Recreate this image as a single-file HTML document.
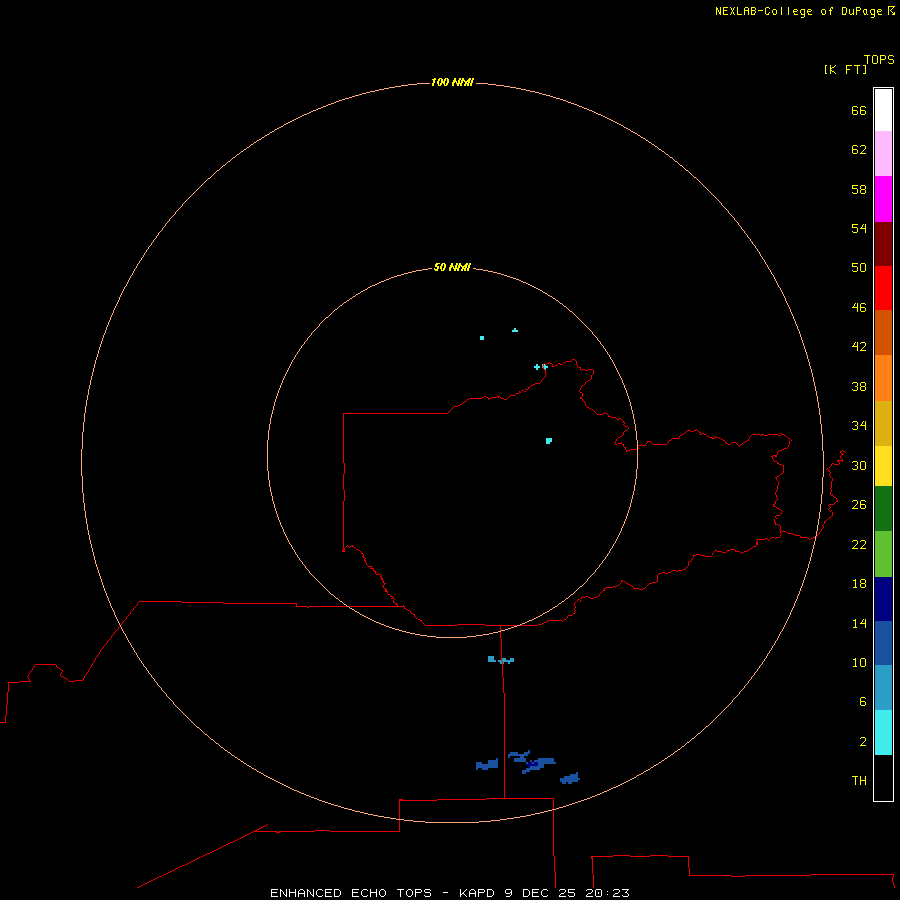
<!DOCTYPE html>
<html lang="en"><head><meta charset="utf-8"><title>ENHANCED ECHO TOPS - KAPD 9 DEC 25 20:23</title>
<style>
html,body{margin:0;padding:0;background:#000;width:900px;height:900px;overflow:hidden}
svg{display:block;position:absolute;left:0;top:0}
.sr{position:absolute;left:0;top:0;width:1px;height:1px;overflow:hidden;color:transparent;font:1px "Liberation Mono",monospace}
</style></head>
<body>
<div class="sr">NEXLAB-College of DuPage. TOPS [K FT] 66 62 58 54 50 46 42 38 34 30 26 22 18 14 10 6 2 TH. 100 NMI. 50 NMI. ENHANCED ECHO TOPS - KAPD 9 DEC 25 20:23</div>
<svg width="900" height="900" viewBox="0 0 900 900" shape-rendering="crispEdges" role="img" aria-label="Enhanced echo tops radar image KAPD">
<rect width="900" height="900" fill="#000"/>
<path fill="#ffff00" d="M888 6h7v1h-7zM716 7h1v1h-1zM716 10h1v5h-1zM720 7h1v5h-1zM720 14h1v1h-1zM723 7h5v1h-5zM723 14h5v1h-5zM730 7h1v1h-1zM730 14h1v1h-1zM734 7h1v1h-1zM734 14h1v1h-1zM737 7h1v7h-1zM745 7h3v1h-3zM751 7h4v1h-4zM751 10h4v1h-4zM751 14h4v1h-4zM766 7h3v1h-3zM766 14h3v1h-3zM781 7h1v8h-1zM788 7h1v8h-1zM831 7h2v1h-2zM842 7h4v1h-4zM842 14h4v1h-4zM856 7h4v1h-4zM856 10h4v1h-4zM888 7h1v8h-1zM888 56h1v3h-1zM888 62h1v1h-1zM893 7h1v1h-1zM893 56h1v1h-1zM893 60h1v3h-1zM716 8h2v2h-2zM723 8h1v2h-1zM723 11h1v3h-1zM731 8h1v2h-1zM731 12h1v2h-1zM733 8h1v2h-1zM733 12h1v2h-1zM744 8h1v2h-1zM744 11h1v4h-1zM748 8h1v2h-1zM748 11h1v4h-1zM751 8h1v2h-1zM751 11h1v3h-1zM755 8h1v2h-1zM755 11h1v2h-1zM765 8h1v6h-1zM769 8h1v1h-1zM769 12h1v1h-1zM830 8h1v2h-1zM830 11h1v4h-1zM830 65h1v3h-1zM830 69h1v1h-1zM830 71h1v3h-1zM832 8h1v1h-1zM842 8h1v6h-1zM846 8h1v5h-1zM846 66h1v3h-1zM846 70h1v4h-1zM856 8h1v2h-1zM856 11h1v4h-1zM856 504h1v1h-1zM856 544h1v1h-1zM860 8h1v2h-1zM860 107h1v3h-1zM860 111h1v3h-1zM860 146h1v1h-1zM860 186h1v3h-1zM860 190h1v3h-1zM860 264h1v7h-1zM860 304h1v3h-1zM860 308h1v3h-1zM860 343h1v1h-1zM860 383h1v3h-1zM860 387h1v3h-1zM860 462h1v7h-1zM860 501h1v3h-1zM860 505h1v3h-1zM860 541h1v1h-1zM860 580h1v3h-1zM860 584h1v3h-1zM860 659h1v7h-1zM860 698h1v3h-1zM860 702h1v3h-1zM860 738h1v1h-1zM860 776h1v4h-1zM860 781h1v4h-1zM892 8h1v1h-1zM892 12h1v1h-1zM773 9h3v1h-3zM773 14h3v1h-3zM794 9h3v1h-3zM801 9h4v1h-4zM801 14h4v1h-4zM808 9h3v1h-3zM822 9h3v1h-3zM822 14h3v1h-3zM849 9h1v5h-1zM853 9h1v4h-1zM853 14h1v1h-1zM853 306h1v1h-1zM853 345h1v1h-1zM853 507h1v1h-1zM853 547h1v1h-1zM864 9h3v1h-3zM871 9h4v1h-4zM871 14h4v1h-4zM878 9h3v1h-3zM891 9h1v1h-1zM891 11h1v1h-1zM718 10h1v2h-1zM723 10h4v1h-4zM732 10h1v2h-1zM744 10h5v1h-5zM758 10h5v1h-5zM772 10h1v3h-1zM776 10h1v4h-1zM793 10h1v1h-1zM793 12h1v1h-1zM797 10h1v1h-1zM800 10h1v3h-1zM804 10h1v4h-1zM804 15h1v2h-1zM807 10h1v1h-1zM807 12h1v1h-1zM811 10h1v1h-1zM821 10h1v3h-1zM825 10h1v4h-1zM825 66h1v7h-1zM829 10h3v1h-3zM863 10h1v3h-1zM863 150h1v1h-1zM863 224h1v1h-1zM863 347h1v1h-1zM863 421h1v1h-1zM863 545h1v1h-1zM863 619h1v1h-1zM863 742h1v1h-1zM866 10h1v4h-1zM870 10h1v3h-1zM874 10h1v4h-1zM874 15h1v2h-1zM877 10h1v1h-1zM877 12h1v1h-1zM877 56h1v7h-1zM881 10h1v1h-1zM890 10h1v1h-1zM793 11h4v1h-4zM807 11h4v1h-4zM877 11h4v1h-4zM719 12h2v2h-2zM894 12h1v1h-1zM754 13h1v1h-1zM768 13h1v1h-1zM773 13h1v1h-1zM794 13h1v1h-1zM801 13h1v1h-1zM808 13h1v1h-1zM822 13h1v1h-1zM845 13h1v1h-1zM852 13h2v1h-2zM864 13h1v1h-1zM864 149h1v1h-1zM864 346h1v1h-1zM864 544h1v1h-1zM864 741h1v1h-1zM871 13h1v1h-1zM878 13h1v1h-1zM893 13h2v1h-2zM737 14h5v1h-5zM794 14h4v1h-4zM808 14h4v1h-4zM850 14h2v1h-2zM864 14h2v1h-2zM867 14h1v1h-1zM867 56h1v8h-1zM878 14h4v1h-4zM892 14h3v1h-3zM801 17h3v1h-3zM871 17h3v1h-3zM864 55h6v1h-6zM873 55h4v1h-4zM873 63h4v1h-4zM880 55h5v1h-5zM880 59h5v1h-5zM889 55h4v1h-4zM889 59h4v1h-4zM889 63h4v1h-4zM872 56h1v7h-1zM880 56h1v3h-1zM880 60h1v4h-1zM885 56h1v3h-1zM825 65h2v1h-2zM825 73h2v1h-2zM835 65h1v1h-1zM835 73h1v1h-1zM846 65h6v1h-6zM854 65h6v1h-6zM863 65h3v1h-3zM863 73h3v1h-3zM834 66h1v1h-1zM834 72h1v1h-1zM857 66h1v8h-1zM857 107h1v1h-1zM857 111h1v3h-1zM857 146h1v1h-1zM857 150h1v3h-1zM857 189h1v4h-1zM857 228h1v4h-1zM857 267h1v4h-1zM857 303h1v4h-1zM857 308h1v4h-1zM857 342h1v4h-1zM857 347h1v4h-1zM857 383h1v3h-1zM857 387h1v3h-1zM857 422h1v3h-1zM857 426h1v3h-1zM857 462h1v3h-1zM857 466h1v3h-1zM857 501h1v3h-1zM857 541h1v3h-1zM865 66h1v7h-1zM865 107h1v1h-1zM865 111h1v3h-1zM865 146h1v3h-1zM865 186h1v3h-1zM865 190h1v3h-1zM865 224h1v4h-1zM865 229h1v4h-1zM865 264h1v7h-1zM865 304h1v1h-1zM865 308h1v3h-1zM865 343h1v3h-1zM865 383h1v3h-1zM865 387h1v3h-1zM865 421h1v4h-1zM865 426h1v4h-1zM865 462h1v7h-1zM865 501h1v1h-1zM865 505h1v3h-1zM865 541h1v3h-1zM865 580h1v3h-1zM865 584h1v3h-1zM865 619h1v4h-1zM865 624h1v4h-1zM865 659h1v7h-1zM865 698h1v1h-1zM865 702h1v3h-1zM865 738h1v3h-1zM865 776h1v4h-1zM865 781h1v4h-1zM832 67h2v1h-2zM832 71h2v1h-2zM830 68h2v1h-2zM830 70h2v1h-2zM846 69h4v1h-4zM434 78h2v1h-2zM439 78h3v1h-3zM445 78h3v1h-3zM454 78h2v2h-2zM454 269h2v2h-2zM459 78h2v2h-2zM459 263h2v2h-2zM462 78h2v2h-2zM462 267h2v1h-2zM469 78h2v1h-2zM469 263h2v2h-2zM472 78h2v2h-2zM432 79h4v1h-4zM438 79h2v2h-2zM441 79h2v2h-2zM441 264h2v2h-2zM444 79h2v2h-2zM444 264h2v4h-2zM447 79h2v4h-2zM468 79h3v1h-3zM433 80h2v3h-2zM453 80h3v1h-3zM458 80h2v3h-2zM458 266h2v2h-2zM461 80h4v1h-4zM467 80h3v1h-3zM471 80h2v3h-2zM437 81h2v3h-2zM437 267h2v2h-2zM441 81h4v2h-4zM453 81h4v1h-4zM461 81h2v2h-2zM461 269h2v2h-2zM464 81h6v1h-6zM452 82h3v1h-3zM456 82h1v1h-1zM465 82h2v1h-2zM465 267h2v1h-2zM468 82h2v1h-2zM468 265h2v3h-2zM432 83h2v3h-2zM440 83h2v2h-2zM440 266h2v3h-2zM443 83h2v1h-2zM443 268h2v2h-2zM446 83h2v2h-2zM452 83h2v3h-2zM456 83h6v1h-6zM465 83h4v1h-4zM470 83h2v3h-2zM438 84h1v1h-1zM444 84h1v1h-1zM457 84h2v2h-2zM457 269h2v2h-2zM460 84h2v2h-2zM464 84h2v2h-2zM464 269h2v2h-2zM467 84h2v2h-2zM467 268h2v3h-2zM438 85h3v1h-3zM444 85h3v1h-3zM853 106h4v1h-4zM853 114h4v1h-4zM853 145h4v1h-4zM853 153h4v1h-4zM853 193h4v1h-4zM853 232h4v1h-4zM853 271h4v1h-4zM853 382h4v1h-4zM853 390h4v1h-4zM853 421h4v1h-4zM853 429h4v1h-4zM853 461h4v1h-4zM853 469h4v1h-4zM853 500h4v1h-4zM853 540h4v1h-4zM853 587h4v1h-4zM853 627h4v1h-4zM853 666h4v1h-4zM861 106h4v1h-4zM861 114h4v1h-4zM861 145h4v1h-4zM861 185h4v1h-4zM861 189h4v1h-4zM861 193h4v1h-4zM861 263h4v1h-4zM861 271h4v1h-4zM861 303h4v1h-4zM861 311h4v1h-4zM861 342h4v1h-4zM861 382h4v1h-4zM861 386h4v1h-4zM861 390h4v1h-4zM861 461h4v1h-4zM861 469h4v1h-4zM861 500h4v1h-4zM861 508h4v1h-4zM861 540h4v1h-4zM861 579h4v1h-4zM861 583h4v1h-4zM861 587h4v1h-4zM861 658h4v1h-4zM861 666h4v1h-4zM861 697h4v1h-4zM861 705h4v1h-4zM861 737h4v1h-4zM852 107h1v3h-1zM852 111h1v3h-1zM852 146h1v3h-1zM852 150h1v3h-1zM852 186h1v2h-1zM852 192h1v1h-1zM852 225h1v2h-1zM852 231h1v1h-1zM852 264h1v2h-1zM852 270h1v1h-1zM852 383h1v1h-1zM852 389h1v1h-1zM852 422h1v1h-1zM852 428h1v1h-1zM852 462h1v1h-1zM852 468h1v1h-1zM852 501h1v1h-1zM852 541h1v1h-1zM852 110h5v1h-5zM852 149h5v1h-5zM852 188h5v1h-5zM852 227h5v1h-5zM852 266h5v1h-5zM860 110h5v1h-5zM860 307h5v1h-5zM860 504h5v1h-5zM860 701h5v1h-5zM862 151h1v1h-1zM862 225h1v2h-1zM862 348h1v1h-1zM862 422h1v2h-1zM862 546h1v1h-1zM862 620h1v2h-1zM862 743h1v1h-1zM861 152h1v1h-1zM861 227h1v1h-1zM861 349h1v1h-1zM861 424h1v1h-1zM861 547h1v1h-1zM861 622h1v1h-1zM861 744h1v1h-1zM860 153h6v1h-6zM860 228h6v1h-6zM860 350h6v1h-6zM860 425h6v1h-6zM860 548h6v1h-6zM860 623h6v1h-6zM860 745h6v1h-6zM860 780h6v1h-6zM852 185h6v1h-6zM852 224h6v1h-6zM852 263h6v1h-6zM852 307h6v1h-6zM852 346h6v1h-6zM852 508h6v1h-6zM852 548h6v1h-6zM852 776h6v1h-6zM436 263h4v1h-4zM442 263h3v1h-3zM451 263h2v2h-2zM456 263h2v2h-2zM466 263h2v1h-2zM435 264h3v1h-3zM435 270h3v1h-3zM465 264h3v1h-3zM435 265h2v1h-2zM450 265h3v1h-3zM455 265h2v3h-2zM458 265h4v1h-4zM464 265h3v1h-3zM435 266h4v1h-4zM450 266h4v1h-4zM461 266h6v1h-6zM449 267h3v1h-3zM453 267h1v1h-1zM434 268h1v1h-1zM449 268h2v3h-2zM453 268h6v1h-6zM462 268h4v1h-4zM434 269h4v1h-4zM441 269h1v1h-1zM441 270h3v1h-3zM855 303h1v1h-1zM855 342h1v1h-1zM855 505h1v1h-1zM855 545h1v1h-1zM855 579h1v1h-1zM855 581h1v6h-1zM855 619h1v1h-1zM855 621h1v6h-1zM855 658h1v1h-1zM855 660h1v6h-1zM855 777h1v8h-1zM854 304h1v2h-1zM854 343h1v2h-1zM854 506h1v1h-1zM854 546h1v1h-1zM855 386h2v1h-2zM855 425h2v1h-2zM855 465h2v1h-2zM853 580h3v1h-3zM853 620h3v1h-3zM853 659h3v1h-3z"/>
<path fill="#ffaa7d" d="M417 83h13v1h-13zM476 83h12v1h-12zM408 84h9v1h-9zM488 84h8v1h-8zM401 85h7v1h-7zM496 85h8v1h-8zM395 86h6v1h-6zM504 86h6v1h-6zM389 87h6v1h-6zM510 87h6v1h-6zM384 88h5v1h-5zM516 88h5v1h-5zM379 89h5v1h-5zM521 89h5v1h-5zM375 90h4v1h-4zM526 90h4v1h-4zM370 91h5v1h-5zM530 91h5v1h-5zM366 92h4v1h-4zM535 92h4v1h-4zM362 93h4v1h-4zM539 93h3v1h-3zM359 94h3v1h-3zM542 94h4v1h-4zM355 95h4v1h-4zM546 95h4v1h-4zM352 96h3v1h-3zM352 810h3v1h-3zM550 96h3v1h-3zM349 97h3v1h-3zM553 97h3v1h-3zM345 98h4v1h-4zM556 98h4v1h-4zM342 99h3v1h-3zM560 99h3v1h-3zM339 100h3v1h-3zM563 100h3v1h-3zM563 806h3v1h-3zM336 101h3v1h-3zM566 101h2v1h-2zM566 598h2v1h-2zM334 102h2v1h-2zM568 102h3v1h-3zM331 103h3v1h-3zM331 804h3v1h-3zM571 103h3v1h-3zM328 104h3v1h-3zM328 803h3v1h-3zM574 104h3v1h-3zM326 105h2v1h-2zM326 317h2v1h-2zM577 105h2v1h-2zM323 106h3v1h-3zM579 106h3v1h-3zM321 107h2v1h-2zM582 107h2v1h-2zM318 108h3v1h-3zM584 108h3v1h-3zM584 799h3v1h-3zM316 109h2v1h-2zM587 109h2v1h-2zM313 110h3v1h-3zM589 110h3v1h-3zM311 111h2v1h-2zM592 111h2v1h-2zM309 112h2v1h-2zM309 796h2v1h-2zM594 112h2v1h-2zM307 113h2v1h-2zM596 113h2v1h-2zM304 114h3v1h-3zM598 114h3v1h-3zM302 115h2v1h-2zM601 115h2v1h-2zM300 116h2v1h-2zM603 116h2v1h-2zM298 117h2v1h-2zM605 117h2v1h-2zM296 118h2v1h-2zM607 118h2v1h-2zM607 790h2v1h-2zM294 119h2v1h-2zM609 119h2v1h-2zM609 789h2v1h-2zM292 120h2v1h-2zM292 789h2v1h-2zM611 120h2v1h-2zM611 788h2v1h-2zM290 121h2v1h-2zM290 788h2v1h-2zM613 121h2v1h-2zM288 122h2v1h-2zM288 787h2v1h-2zM615 122h2v1h-2zM286 123h2v1h-2zM286 786h2v1h-2zM617 123h2v1h-2zM284 124h2v1h-2zM284 785h2v1h-2zM619 124h2v1h-2zM283 125h1v1h-1zM283 378h1v2h-1zM283 529h1v3h-1zM621 125h2v1h-2zM281 126h2v1h-2zM623 126h1v1h-1zM623 383h1v2h-1zM623 524h1v2h-1zM279 127h2v1h-2zM624 127h2v1h-2zM624 782h2v1h-2zM277 128h2v1h-2zM626 128h2v1h-2zM626 781h2v1h-2zM275 129h2v1h-2zM628 129h2v1h-2zM628 780h2v1h-2zM274 130h1v1h-1zM274 402h1v4h-1zM274 504h1v4h-1zM630 130h1v1h-1zM630 402h1v4h-1zM630 503h1v4h-1zM272 131h2v1h-2zM272 779h2v1h-2zM631 131h2v1h-2zM270 132h2v1h-2zM270 778h2v1h-2zM633 132h2v1h-2zM269 133h1v1h-1zM269 424h1v6h-1zM269 480h1v7h-1zM635 133h2v1h-2zM267 134h2v1h-2zM637 134h1v1h-1zM637 440h1v29h-1zM265 135h2v1h-2zM638 135h2v1h-2zM264 136h1v1h-1zM640 136h1v1h-1zM262 137h2v1h-2zM641 137h2v1h-2zM641 773h2v1h-2zM261 138h1v1h-1zM643 138h2v1h-2zM259 139h2v1h-2zM259 772h2v1h-2zM645 139h1v1h-1zM257 140h2v1h-2zM257 771h2v1h-2zM646 140h2v1h-2zM646 770h2v1h-2zM256 141h1v1h-1zM256 770h1v1h-1zM648 141h1v1h-1zM254 142h2v1h-2zM254 769h2v1h-2zM649 142h2v1h-2zM253 143h1v1h-1zM651 143h1v1h-1zM251 144h2v1h-2zM652 144h2v1h-2zM250 145h1v1h-1zM654 145h1v1h-1zM249 146h1v1h-1zM655 146h2v1h-2zM247 147h2v1h-2zM247 765h2v1h-2zM657 147h1v1h-1zM246 148h1v1h-1zM246 764h1v1h-1zM658 148h1v1h-1zM658 763h1v1h-1zM244 149h2v1h-2zM244 763h2v1h-2zM659 149h2v1h-2zM659 762h2v1h-2zM243 150h1v1h-1zM243 762h1v1h-1zM661 150h1v1h-1zM661 761h1v1h-1zM241 151h2v1h-2zM241 761h2v1h-2zM662 151h2v1h-2zM662 760h2v1h-2zM240 152h1v1h-1zM240 760h1v1h-1zM664 152h1v1h-1zM664 759h1v1h-1zM239 153h1v1h-1zM665 153h1v1h-1zM237 154h2v1h-2zM666 154h2v1h-2zM236 155h1v1h-1zM668 155h1v1h-1zM235 156h1v1h-1zM669 156h1v1h-1zM233 157h2v1h-2zM670 157h2v1h-2zM232 158h1v1h-1zM672 158h1v1h-1zM231 159h1v1h-1zM231 754h1v1h-1zM673 159h1v1h-1zM673 753h1v1h-1zM230 160h1v1h-1zM230 753h1v1h-1zM674 160h1v1h-1zM674 752h1v1h-1zM228 161h2v1h-2zM228 752h2v1h-2zM675 161h2v1h-2zM675 751h2v1h-2zM227 162h1v1h-1zM227 751h1v1h-1zM677 162h1v1h-1zM677 750h1v1h-1zM226 163h1v1h-1zM678 163h1v1h-1zM225 164h1v1h-1zM679 164h1v1h-1zM223 165h2v1h-2zM680 165h2v1h-2zM222 166h1v1h-1zM682 166h1v1h-1zM221 167h1v1h-1zM683 167h1v1h-1zM220 168h1v1h-1zM220 746h1v1h-1zM684 168h1v1h-1zM684 745h1v1h-1zM219 169h1v1h-1zM219 745h1v1h-1zM685 169h1v1h-1zM685 744h1v1h-1zM217 170h2v1h-2zM686 170h2v1h-2zM216 171h1v1h-1zM688 171h1v1h-1zM215 172h1v1h-1zM215 742h1v1h-1zM689 172h1v1h-1zM689 741h1v1h-1zM214 173h1v1h-1zM214 741h1v1h-1zM690 173h1v1h-1zM690 740h1v1h-1zM213 174h1v1h-1zM213 740h1v1h-1zM691 174h1v1h-1zM691 739h1v1h-1zM212 175h1v1h-1zM692 175h1v1h-1zM211 176h1v1h-1zM693 176h1v1h-1zM210 177h1v1h-1zM210 738h1v1h-1zM694 177h2v1h-2zM208 178h2v1h-2zM696 178h1v1h-1zM696 735h1v1h-1zM207 179h1v1h-1zM207 735h1v1h-1zM697 179h1v1h-1zM697 734h1v1h-1zM206 180h1v1h-1zM698 180h1v1h-1zM205 181h1v1h-1zM699 181h1v1h-1zM204 182h1v1h-1zM204 733h1v1h-1zM700 182h1v1h-1zM700 732h1v1h-1zM203 183h1v1h-1zM203 732h1v1h-1zM701 183h1v1h-1zM701 731h1v1h-1zM202 184h1v1h-1zM202 731h1v1h-1zM702 184h1v1h-1zM702 730h1v1h-1zM201 185h1v1h-1zM201 730h1v1h-1zM703 185h1v1h-1zM703 729h1v1h-1zM200 186h1v1h-1zM200 729h1v1h-1zM704 186h1v1h-1zM704 728h1v1h-1zM199 187h1v1h-1zM199 728h1v1h-1zM705 187h1v1h-1zM705 727h1v1h-1zM198 188h1v1h-1zM706 188h1v1h-1zM197 189h1v1h-1zM707 189h1v1h-1zM196 190h1v1h-1zM196 726h1v1h-1zM708 190h1v1h-1zM708 725h1v1h-1zM195 191h1v1h-1zM195 725h1v1h-1zM709 191h1v1h-1zM709 724h1v1h-1zM194 192h1v1h-1zM194 724h1v1h-1zM710 192h1v1h-1zM710 723h1v1h-1zM193 193h1v1h-1zM193 723h1v1h-1zM711 193h1v1h-1zM711 722h1v1h-1zM192 194h1v1h-1zM192 722h1v1h-1zM712 194h1v1h-1zM712 721h1v1h-1zM191 195h1v1h-1zM191 721h1v1h-1zM713 195h1v1h-1zM713 720h1v1h-1zM190 196h1v1h-1zM190 720h1v1h-1zM714 196h1v1h-1zM714 719h1v1h-1zM189 197h1v1h-1zM189 719h1v1h-1zM715 197h1v1h-1zM715 718h1v1h-1zM188 198h1v1h-1zM188 718h1v1h-1zM716 198h1v1h-1zM716 717h1v1h-1zM187 199h1v1h-1zM187 717h1v1h-1zM717 199h1v1h-1zM717 716h1v1h-1zM186 200h1v1h-1zM186 716h1v1h-1zM718 200h1v1h-1zM718 715h1v1h-1zM185 201h1v1h-1zM185 715h1v1h-1zM719 201h1v1h-1zM719 714h1v1h-1zM184 202h1v1h-1zM184 714h1v1h-1zM720 202h1v1h-1zM720 713h1v1h-1zM183 203h1v1h-1zM183 713h1v1h-1zM721 203h1v2h-1zM721 712h1v1h-1zM182 204h1v2h-1zM182 712h1v1h-1zM722 205h1v1h-1zM722 711h1v1h-1zM181 206h1v1h-1zM181 711h1v1h-1zM723 206h1v1h-1zM723 710h1v1h-1zM180 207h1v1h-1zM180 710h1v1h-1zM724 207h1v1h-1zM724 709h1v1h-1zM179 208h1v1h-1zM179 709h1v1h-1zM725 208h1v1h-1zM725 708h1v1h-1zM178 209h1v1h-1zM178 708h1v1h-1zM726 209h1v1h-1zM726 707h1v1h-1zM177 210h1v1h-1zM177 707h1v1h-1zM727 210h1v1h-1zM727 706h1v1h-1zM176 211h1v1h-1zM176 706h1v1h-1zM728 211h1v2h-1zM728 705h1v1h-1zM175 212h1v2h-1zM175 705h1v1h-1zM729 213h1v1h-1zM729 704h1v1h-1zM174 214h1v1h-1zM174 704h1v1h-1zM730 214h1v1h-1zM730 703h1v1h-1zM173 215h1v1h-1zM173 702h1v2h-1zM731 215h1v1h-1zM731 702h1v1h-1zM172 216h1v1h-1zM172 701h1v1h-1zM732 216h1v1h-1zM732 700h1v2h-1zM171 217h1v1h-1zM171 700h1v1h-1zM733 217h1v1h-1zM733 699h1v1h-1zM170 218h1v1h-1zM170 699h1v1h-1zM734 218h1v2h-1zM734 698h1v1h-1zM169 219h1v2h-1zM169 698h1v1h-1zM735 220h1v1h-1zM735 697h1v1h-1zM168 221h1v1h-1zM168 697h1v1h-1zM736 221h1v1h-1zM736 696h1v1h-1zM167 222h1v1h-1zM167 696h1v1h-1zM737 222h1v1h-1zM737 695h1v1h-1zM166 223h1v1h-1zM166 694h1v2h-1zM738 223h1v2h-1zM738 694h1v1h-1zM165 224h1v2h-1zM165 693h1v1h-1zM739 225h1v1h-1zM739 692h1v2h-1zM164 226h1v1h-1zM164 692h1v1h-1zM740 226h1v1h-1zM740 691h1v1h-1zM163 227h1v1h-1zM163 691h1v1h-1zM741 227h1v2h-1zM741 690h1v1h-1zM162 228h1v2h-1zM162 690h1v1h-1zM742 229h1v1h-1zM742 689h1v1h-1zM161 230h1v1h-1zM161 688h1v2h-1zM743 230h1v1h-1zM743 688h1v1h-1zM160 231h1v1h-1zM160 687h1v1h-1zM744 231h1v2h-1zM744 686h1v2h-1zM159 232h1v1h-1zM159 686h1v1h-1zM158 233h1v2h-1zM158 685h1v1h-1zM745 233h1v1h-1zM745 685h1v1h-1zM746 234h1v1h-1zM746 684h1v1h-1zM157 235h1v1h-1zM157 683h1v2h-1zM747 235h1v2h-1zM747 683h1v1h-1zM156 236h1v2h-1zM156 682h1v1h-1zM748 237h1v1h-1zM748 681h1v2h-1zM155 238h1v1h-1zM155 681h1v1h-1zM749 238h1v1h-1zM749 680h1v1h-1zM154 239h1v1h-1zM154 679h1v2h-1zM750 239h1v2h-1zM750 679h1v1h-1zM153 240h1v2h-1zM153 678h1v1h-1zM751 241h1v1h-1zM751 677h1v2h-1zM152 242h1v1h-1zM152 677h1v1h-1zM752 242h1v2h-1zM752 676h1v1h-1zM151 243h1v2h-1zM151 675h1v2h-1zM753 244h1v1h-1zM753 675h1v1h-1zM150 245h1v1h-1zM150 674h1v1h-1zM754 245h1v1h-1zM754 673h1v2h-1zM149 246h1v1h-1zM149 673h1v1h-1zM755 246h1v2h-1zM755 672h1v1h-1zM148 247h1v2h-1zM148 671h1v2h-1zM756 248h1v1h-1zM756 671h1v1h-1zM147 249h1v1h-1zM147 670h1v1h-1zM757 249h1v2h-1zM757 669h1v2h-1zM146 250h1v2h-1zM146 668h1v2h-1zM758 251h1v1h-1zM758 668h1v1h-1zM145 252h1v1h-1zM145 667h1v1h-1zM759 252h1v2h-1zM759 666h1v2h-1zM144 253h1v2h-1zM144 666h1v1h-1zM760 254h1v2h-1zM760 665h1v1h-1zM143 255h1v2h-1zM143 664h1v2h-1zM761 256h1v1h-1zM761 664h1v1h-1zM142 257h1v1h-1zM142 663h1v1h-1zM762 257h1v2h-1zM762 662h1v2h-1zM141 258h1v2h-1zM141 661h1v2h-1zM763 259h1v1h-1zM763 661h1v1h-1zM140 260h1v1h-1zM140 660h1v1h-1zM764 260h1v2h-1zM764 659h1v2h-1zM139 261h1v2h-1zM139 658h1v2h-1zM765 262h1v2h-1zM765 658h1v1h-1zM138 263h1v1h-1zM138 657h1v1h-1zM137 264h1v2h-1zM137 655h1v2h-1zM766 264h1v1h-1zM766 656h1v2h-1zM767 265h1v2h-1zM767 654h1v2h-1zM136 266h1v2h-1zM136 653h1v2h-1zM768 267h1v2h-1zM768 653h1v1h-1zM135 268h1v1h-1zM135 652h1v1h-1zM428 268h4v1h-4zM473 268h3v1h-3zM134 269h1v2h-1zM134 650h1v2h-1zM422 269h6v1h-6zM476 269h7v1h-7zM476 635h7v1h-7zM769 269h1v1h-1zM769 651h1v2h-1zM416 270h6v1h-6zM483 270h5v1h-5zM770 270h1v2h-1zM770 650h1v1h-1zM133 271h1v2h-1zM133 648h1v2h-1zM412 271h4v1h-4zM488 271h5v1h-5zM408 272h4v1h-4zM493 272h4v1h-4zM771 272h1v2h-1zM771 648h1v2h-1zM132 273h1v2h-1zM132 647h1v1h-1zM404 273h4v1h-4zM497 273h4v1h-4zM401 274h3v1h-3zM501 274h3v1h-3zM772 274h1v1h-1zM772 646h1v2h-1zM131 275h1v1h-1zM131 645h1v2h-1zM397 275h4v1h-4zM504 275h3v1h-3zM773 275h1v2h-1zM773 645h1v1h-1zM130 276h1v2h-1zM130 643h1v2h-1zM394 276h3v1h-3zM507 276h3v1h-3zM391 277h3v1h-3zM510 277h3v1h-3zM774 277h1v2h-1zM774 643h1v2h-1zM129 278h1v2h-1zM129 642h1v1h-1zM389 278h2v1h-2zM513 278h3v1h-3zM386 279h3v1h-3zM386 626h3v1h-3zM516 279h3v1h-3zM775 279h1v2h-1zM775 641h1v2h-1zM128 280h1v2h-1zM128 640h1v2h-1zM384 280h2v1h-2zM384 625h2v1h-2zM519 280h2v1h-2zM381 281h3v1h-3zM381 624h3v1h-3zM521 281h2v1h-2zM776 281h1v2h-1zM776 640h1v1h-1zM127 282h1v2h-1zM127 638h1v2h-1zM379 282h2v1h-2zM379 623h2v1h-2zM523 282h3v1h-3zM377 283h2v1h-2zM526 283h2v1h-2zM777 283h1v2h-1zM777 638h1v2h-1zM126 284h1v2h-1zM126 636h1v2h-1zM375 284h2v1h-2zM528 284h2v1h-2zM372 285h3v1h-3zM530 285h2v1h-2zM778 285h1v2h-1zM778 636h1v2h-1zM125 286h1v1h-1zM125 634h1v2h-1zM370 286h2v1h-2zM370 619h2v1h-2zM532 286h2v1h-2zM532 619h2v1h-2zM124 287h1v2h-1zM124 633h1v1h-1zM368 287h2v1h-2zM368 618h2v1h-2zM534 287h2v1h-2zM534 618h2v1h-2zM779 287h1v1h-1zM779 634h1v2h-1zM367 288h1v1h-1zM536 288h2v1h-2zM536 617h2v1h-2zM780 288h1v2h-1zM780 632h1v2h-1zM123 289h1v2h-1zM123 631h1v2h-1zM365 289h2v1h-2zM538 289h2v1h-2zM538 616h2v1h-2zM363 290h2v1h-2zM540 290h2v1h-2zM540 615h2v1h-2zM781 290h1v2h-1zM781 631h1v1h-1zM122 291h1v2h-1zM122 629h1v2h-1zM361 291h2v1h-2zM542 291h1v1h-1zM542 614h1v1h-1zM360 292h1v1h-1zM543 292h2v1h-2zM543 613h2v1h-2zM782 292h1v2h-1zM782 629h1v2h-1zM121 293h1v2h-1zM121 627h1v2h-1zM358 293h2v1h-2zM545 293h2v1h-2zM545 612h2v1h-2zM356 294h2v1h-2zM547 294h1v1h-1zM783 294h1v2h-1zM783 627h1v2h-1zM120 295h1v2h-1zM120 625h1v2h-1zM355 295h1v1h-1zM548 295h2v1h-2zM353 296h2v1h-2zM550 296h2v1h-2zM550 609h2v1h-2zM784 296h1v2h-1zM784 625h1v2h-1zM119 297h1v3h-1zM119 623h1v2h-1zM352 297h1v1h-1zM552 297h1v1h-1zM552 608h1v1h-1zM350 298h2v1h-2zM350 608h2v1h-2zM553 298h2v1h-2zM553 607h2v1h-2zM785 298h1v3h-1zM785 623h1v2h-1zM349 299h1v1h-1zM349 607h1v1h-1zM555 299h1v1h-1zM118 300h1v2h-1zM118 621h1v2h-1zM347 300h2v1h-2zM347 606h2v1h-2zM556 300h2v1h-2zM346 301h1v1h-1zM346 605h1v1h-1zM558 301h1v1h-1zM558 604h1v1h-1zM786 301h1v2h-1zM786 621h1v2h-1zM117 302h1v2h-1zM117 619h1v2h-1zM344 302h2v1h-2zM344 604h2v1h-2zM559 302h1v1h-1zM343 303h1v1h-1zM343 603h1v1h-1zM560 303h2v1h-2zM787 303h1v2h-1zM787 619h1v2h-1zM116 304h1v2h-1zM116 617h1v2h-1zM342 304h1v1h-1zM342 602h1v1h-1zM562 304h1v1h-1zM340 305h2v1h-2zM340 601h2v1h-2zM563 305h1v1h-1zM788 305h1v2h-1zM788 617h1v2h-1zM115 306h1v2h-1zM115 615h1v2h-1zM339 306h1v1h-1zM339 600h1v1h-1zM564 306h2v1h-2zM338 307h1v1h-1zM338 599h1v1h-1zM566 307h1v1h-1zM789 307h1v2h-1zM789 615h1v2h-1zM114 308h1v2h-1zM114 612h1v3h-1zM337 308h1v1h-1zM567 308h1v1h-1zM335 309h2v1h-2zM568 309h1v1h-1zM568 597h1v1h-1zM790 309h1v3h-1zM790 612h1v3h-1zM113 310h1v3h-1zM113 610h1v2h-1zM334 310h1v1h-1zM334 596h1v1h-1zM569 310h1v1h-1zM569 596h1v1h-1zM333 311h1v1h-1zM333 595h1v1h-1zM570 311h2v1h-2zM332 312h1v1h-1zM572 312h1v1h-1zM791 312h1v2h-1zM791 610h1v2h-1zM112 313h1v2h-1zM112 608h1v2h-1zM331 313h1v1h-1zM573 313h1v1h-1zM573 593h1v1h-1zM330 314h1v1h-1zM330 593h1v1h-1zM574 314h1v1h-1zM574 592h1v1h-1zM792 314h1v2h-1zM792 608h1v2h-1zM111 315h1v2h-1zM111 606h1v2h-1zM329 315h1v1h-1zM329 592h1v1h-1zM575 315h1v1h-1zM575 591h1v1h-1zM328 316h1v1h-1zM328 591h1v1h-1zM576 316h1v1h-1zM576 590h1v1h-1zM793 316h1v3h-1zM793 606h1v2h-1zM110 317h1v3h-1zM110 603h1v3h-1zM577 317h1v1h-1zM577 589h1v1h-1zM325 318h1v1h-1zM325 588h1v1h-1zM578 318h1v1h-1zM578 588h1v1h-1zM324 319h1v1h-1zM324 587h1v1h-1zM579 319h1v1h-1zM579 587h1v1h-1zM794 319h1v2h-1zM794 603h1v3h-1zM109 320h1v2h-1zM109 601h1v2h-1zM323 320h1v1h-1zM323 586h1v1h-1zM580 320h1v1h-1zM322 321h1v1h-1zM322 585h1v1h-1zM581 321h1v1h-1zM795 321h1v3h-1zM795 601h1v2h-1zM108 322h1v3h-1zM108 598h1v3h-1zM321 322h1v1h-1zM321 584h1v1h-1zM582 322h1v1h-1zM582 585h1v1h-1zM320 323h1v1h-1zM320 583h1v1h-1zM583 323h1v1h-1zM583 584h1v1h-1zM319 324h1v2h-1zM319 582h1v1h-1zM584 324h1v1h-1zM584 583h1v1h-1zM796 324h1v2h-1zM796 599h1v2h-1zM107 325h1v2h-1zM107 596h1v2h-1zM585 325h1v1h-1zM585 582h1v1h-1zM318 326h1v1h-1zM318 581h1v1h-1zM586 326h1v1h-1zM586 581h1v1h-1zM797 326h1v3h-1zM797 596h1v3h-1zM106 327h1v3h-1zM106 593h1v3h-1zM317 327h1v1h-1zM317 580h1v1h-1zM587 327h1v1h-1zM587 579h1v2h-1zM316 328h1v1h-1zM316 579h1v1h-1zM588 328h1v1h-1zM588 578h1v1h-1zM315 329h1v1h-1zM315 578h1v1h-1zM589 329h1v1h-1zM589 577h1v1h-1zM798 329h1v2h-1zM798 594h1v2h-1zM105 330h1v3h-1zM105 591h1v2h-1zM314 330h1v1h-1zM314 577h1v1h-1zM590 330h1v1h-1zM590 576h1v1h-1zM313 331h1v1h-1zM313 576h1v1h-1zM591 331h1v1h-1zM591 575h1v1h-1zM799 331h1v3h-1zM799 591h1v3h-1zM312 332h1v1h-1zM312 575h1v1h-1zM592 332h1v2h-1zM592 574h1v1h-1zM104 333h1v2h-1zM104 588h1v3h-1zM311 333h1v2h-1zM311 574h1v1h-1zM593 334h1v1h-1zM593 573h1v1h-1zM800 334h1v3h-1zM800 588h1v3h-1zM103 335h1v3h-1zM103 585h1v3h-1zM310 335h1v1h-1zM310 573h1v1h-1zM594 335h1v1h-1zM594 572h1v1h-1zM309 336h1v1h-1zM309 571h1v2h-1zM595 336h1v1h-1zM595 570h1v2h-1zM308 337h1v1h-1zM308 570h1v1h-1zM596 337h1v1h-1zM596 569h1v1h-1zM801 337h1v3h-1zM801 586h1v2h-1zM102 338h1v3h-1zM102 582h1v3h-1zM307 338h1v2h-1zM307 569h1v1h-1zM597 338h1v2h-1zM597 568h1v1h-1zM306 340h1v1h-1zM306 568h1v1h-1zM598 340h1v1h-1zM598 567h1v1h-1zM802 340h1v3h-1zM802 583h1v3h-1zM101 341h1v3h-1zM101 579h1v3h-1zM305 341h1v1h-1zM305 566h1v2h-1zM599 341h1v1h-1zM599 565h1v2h-1zM304 342h1v2h-1zM304 565h1v1h-1zM600 342h1v2h-1zM600 564h1v1h-1zM803 343h1v3h-1zM803 580h1v3h-1zM100 344h1v3h-1zM100 576h1v3h-1zM303 344h1v1h-1zM303 564h1v1h-1zM601 344h1v1h-1zM601 563h1v1h-1zM302 345h1v1h-1zM302 562h1v2h-1zM602 345h1v1h-1zM602 561h1v2h-1zM301 346h1v2h-1zM301 561h1v1h-1zM603 346h1v2h-1zM603 560h1v1h-1zM804 346h1v3h-1zM804 577h1v3h-1zM99 347h1v3h-1zM99 573h1v3h-1zM300 348h1v1h-1zM300 560h1v1h-1zM604 348h1v1h-1zM604 559h1v1h-1zM299 349h1v2h-1zM299 558h1v2h-1zM605 349h1v2h-1zM605 557h1v2h-1zM805 349h1v3h-1zM805 574h1v3h-1zM98 350h1v4h-1zM98 570h1v3h-1zM298 351h1v1h-1zM298 557h1v1h-1zM606 351h1v1h-1zM606 556h1v1h-1zM297 352h1v2h-1zM297 555h1v2h-1zM607 352h1v2h-1zM607 554h1v2h-1zM806 352h1v3h-1zM806 571h1v3h-1zM97 354h1v3h-1zM97 567h1v3h-1zM296 354h1v1h-1zM296 554h1v1h-1zM608 354h1v1h-1zM608 553h1v1h-1zM295 355h1v2h-1zM295 552h1v2h-1zM609 355h1v2h-1zM609 551h1v2h-1zM807 355h1v4h-1zM807 568h1v3h-1zM96 357h1v3h-1zM96 564h1v3h-1zM294 357h1v2h-1zM294 550h1v2h-1zM610 357h1v2h-1zM610 549h1v2h-1zM293 359h1v1h-1zM293 549h1v1h-1zM611 359h1v1h-1zM611 548h1v1h-1zM808 359h1v3h-1zM808 564h1v4h-1zM95 360h1v4h-1zM95 560h1v4h-1zM292 360h1v2h-1zM292 547h1v2h-1zM612 360h1v2h-1zM612 546h1v2h-1zM291 362h1v2h-1zM291 545h1v2h-1zM613 362h1v2h-1zM613 544h1v2h-1zM809 362h1v4h-1zM809 561h1v3h-1zM94 364h1v4h-1zM94 556h1v4h-1zM290 364h1v2h-1zM290 544h1v1h-1zM614 364h1v2h-1zM614 543h1v1h-1zM289 366h1v2h-1zM289 542h1v2h-1zM615 366h1v2h-1zM615 541h1v2h-1zM810 366h1v3h-1zM810 557h1v4h-1zM93 368h1v4h-1zM93 552h1v4h-1zM288 368h1v2h-1zM288 540h1v2h-1zM616 368h1v2h-1zM616 539h1v2h-1zM811 369h1v4h-1zM811 553h1v4h-1zM287 370h1v2h-1zM287 538h1v2h-1zM617 370h1v2h-1zM617 537h1v2h-1zM92 372h1v4h-1zM92 548h1v4h-1zM286 372h1v2h-1zM286 536h1v2h-1zM618 372h1v2h-1zM618 535h1v2h-1zM812 373h1v4h-1zM812 549h1v4h-1zM285 374h1v2h-1zM285 534h1v2h-1zM619 374h1v2h-1zM619 533h1v2h-1zM91 376h1v4h-1zM91 544h1v4h-1zM284 376h1v2h-1zM284 532h1v2h-1zM620 376h1v2h-1zM620 531h1v2h-1zM813 377h1v5h-1zM813 545h1v4h-1zM621 378h1v2h-1zM621 528h1v3h-1zM90 380h1v5h-1zM90 540h1v4h-1zM282 380h1v3h-1zM282 527h1v2h-1zM622 380h1v3h-1zM622 526h1v2h-1zM814 382h1v4h-1zM814 541h1v4h-1zM281 383h1v2h-1zM281 525h1v2h-1zM89 385h1v4h-1zM89 535h1v5h-1zM280 385h1v3h-1zM280 522h1v3h-1zM624 385h1v3h-1zM624 521h1v3h-1zM815 386h1v5h-1zM815 536h1v5h-1zM279 388h1v2h-1zM279 520h1v2h-1zM625 388h1v2h-1zM625 519h1v2h-1zM88 389h1v6h-1zM88 530h1v5h-1zM278 390h1v3h-1zM278 517h1v3h-1zM626 390h1v3h-1zM626 516h1v3h-1zM816 391h1v5h-1zM816 531h1v5h-1zM277 393h1v3h-1zM277 514h1v3h-1zM627 393h1v3h-1zM627 513h1v3h-1zM87 395h1v5h-1zM87 524h1v6h-1zM276 396h1v3h-1zM276 511h1v3h-1zM628 396h1v3h-1zM628 510h1v3h-1zM817 396h1v6h-1zM817 525h1v6h-1zM275 399h1v3h-1zM275 508h1v3h-1zM629 399h1v3h-1zM629 507h1v3h-1zM86 400h1v6h-1zM86 518h1v6h-1zM818 402h1v6h-1zM818 519h1v6h-1zM85 406h1v7h-1zM85 511h1v7h-1zM273 406h1v4h-1zM273 501h1v3h-1zM631 406h1v4h-1zM631 499h1v4h-1zM819 408h1v7h-1zM819 512h1v7h-1zM272 410h1v4h-1zM272 496h1v5h-1zM632 410h1v4h-1zM632 495h1v4h-1zM84 413h1v9h-1zM84 503h1v8h-1zM271 414h1v4h-1zM271 492h1v4h-1zM633 414h1v5h-1zM633 491h1v4h-1zM820 415h1v9h-1zM820 504h1v8h-1zM270 418h1v6h-1zM270 487h1v5h-1zM634 419h1v5h-1zM634 485h1v6h-1zM83 422h1v10h-1zM83 493h1v10h-1zM635 424h1v7h-1zM635 479h1v6h-1zM821 424h1v10h-1zM821 494h1v10h-1zM268 430h1v10h-1zM268 471h1v9h-1zM636 431h1v9h-1zM636 469h1v10h-1zM636 776h1v1h-1zM82 432h1v17h-1zM82 476h1v17h-1zM822 434h1v17h-1zM822 477h1v17h-1zM267 440h1v31h-1zM81 449h1v27h-1zM823 451h1v26h-1zM580 586h2v1h-2zM326 589h1v1h-1zM327 590h1v1h-1zM331 594h2v1h-2zM571 594h2v1h-2zM570 595h1v1h-1zM335 597h1v1h-1zM336 598h2v1h-2zM565 599h1v1h-1zM564 600h1v1h-1zM562 601h2v1h-2zM561 602h1v1h-1zM559 603h2v1h-2zM557 605h1v1h-1zM555 606h2v1h-2zM352 609h2v1h-2zM354 610h1v1h-1zM549 610h1v1h-1zM355 611h2v1h-2zM547 611h2v1h-2zM357 612h2v1h-2zM359 613h1v1h-1zM360 614h2v1h-2zM362 615h2v1h-2zM364 616h2v1h-2zM366 617h2v1h-2zM372 620h2v1h-2zM529 620h3v1h-3zM374 621h2v1h-2zM527 621h2v1h-2zM376 622h3v1h-3zM525 622h2v1h-2zM522 623h3v1h-3zM520 624h2v1h-2zM517 625h3v1h-3zM514 626h3v1h-3zM389 627h3v1h-3zM511 627h3v1h-3zM392 628h3v1h-3zM508 628h3v1h-3zM395 629h4v1h-4zM505 629h3v1h-3zM399 630h3v1h-3zM501 630h4v1h-4zM402 631h4v1h-4zM498 631h3v1h-3zM406 632h4v1h-4zM493 632h5v1h-5zM410 633h5v1h-5zM489 633h4v1h-4zM415 634h5v1h-5zM483 634h6v1h-6zM420 635h7v1h-7zM427 636h9v1h-9zM467 636h9v1h-9zM436 637h31v1h-31zM706 726h2v1h-2zM197 727h2v1h-2zM698 733h2v1h-2zM205 734h2v1h-2zM208 736h1v1h-1zM695 736h1v1h-1zM209 737h1v1h-1zM694 737h1v1h-1zM692 738h2v1h-2zM211 739h2v1h-2zM687 742h2v1h-2zM216 743h2v1h-2zM686 743h1v1h-1zM218 744h1v1h-1zM682 746h2v1h-2zM221 747h2v1h-2zM681 747h1v1h-1zM223 748h1v1h-1zM680 748h1v1h-1zM224 749h1v1h-1zM678 749h2v1h-2zM225 750h2v1h-2zM671 754h2v1h-2zM232 755h2v1h-2zM670 755h1v1h-1zM234 756h1v1h-1zM668 756h2v1h-2zM235 757h2v1h-2zM667 757h1v1h-1zM237 758h1v1h-1zM665 758h2v1h-2zM238 759h2v1h-2zM656 764h2v1h-2zM654 765h2v1h-2zM249 766h2v1h-2zM653 766h1v1h-1zM251 767h1v1h-1zM651 767h2v1h-2zM252 768h2v1h-2zM650 768h1v1h-1zM648 769h2v1h-2zM644 771h2v1h-2zM643 772h1v1h-1zM261 773h2v1h-2zM263 774h1v1h-1zM639 774h2v1h-2zM264 775h2v1h-2zM637 775h2v1h-2zM266 776h2v1h-2zM268 777h2v1h-2zM634 777h2v1h-2zM632 778h2v1h-2zM630 779h2v1h-2zM274 780h2v1h-2zM276 781h2v1h-2zM278 782h2v1h-2zM280 783h2v1h-2zM622 783h2v1h-2zM282 784h2v1h-2zM620 784h2v1h-2zM618 785h2v1h-2zM616 786h2v1h-2zM613 787h3v1h-3zM294 790h3v1h-3zM297 791h2v1h-2zM604 791h3v1h-3zM299 792h2v1h-2zM602 792h2v1h-2zM301 793h3v1h-3zM600 793h2v1h-2zM304 794h2v1h-2zM597 794h3v1h-3zM306 795h3v1h-3zM595 795h2v1h-2zM592 796h3v1h-3zM311 797h3v1h-3zM590 797h2v1h-2zM314 798h3v1h-3zM587 798h3v1h-3zM317 799h2v1h-2zM319 800h3v1h-3zM581 800h3v1h-3zM322 801h3v1h-3zM578 801h3v1h-3zM325 802h3v1h-3zM575 802h3v1h-3zM572 803h3v1h-3zM569 804h3v1h-3zM334 805h4v1h-4zM566 805h3v1h-3zM338 806h3v1h-3zM341 807h3v1h-3zM559 807h4v1h-4zM344 808h4v1h-4zM556 808h3v1h-3zM348 809h4v1h-4zM552 809h4v1h-4zM548 810h4v1h-4zM355 811h5v1h-5zM544 811h4v1h-4zM360 812h4v1h-4zM540 812h4v1h-4zM364 813h4v1h-4zM535 813h5v1h-5zM368 814h5v1h-5zM531 814h4v1h-4zM373 815h5v1h-5zM526 815h5v1h-5zM378 816h6v1h-6zM520 816h6v1h-6zM384 817h6v1h-6zM514 817h6v1h-6zM390 818h6v1h-6zM507 818h7v1h-7zM396 819h8v1h-8zM500 819h7v1h-7zM404 820h9v1h-9zM491 820h9v1h-9zM413 821h12v1h-12zM479 821h12v1h-12zM425 822h54v1h-54z"/>
<path fill="#ffffff" d="M873 87h21v1h-21zM873 801h21v1h-21zM873 88h1v713h-1zM893 88h1v713h-1zM875 89h17v42h-17zM271 889h7v1h-7zM271 896h7v1h-7zM280 889h1v1h-1zM280 891h1v6h-1zM286 889h1v6h-1zM286 896h1v1h-1zM289 889h1v3h-1zM289 893h1v4h-1zM295 889h1v3h-1zM295 893h1v4h-1zM300 889h3v1h-3zM307 889h1v1h-1zM307 891h1v6h-1zM313 889h1v6h-1zM313 896h1v1h-1zM318 889h4v1h-4zM318 896h4v1h-4zM325 889h7v1h-7zM325 896h7v1h-7zM334 889h5v1h-5zM334 896h5v1h-5zM352 889h7v1h-7zM352 896h7v1h-7zM363 889h4v1h-4zM363 896h4v1h-4zM370 889h1v3h-1zM370 893h1v4h-1zM376 889h1v3h-1zM376 893h1v4h-1zM381 889h3v1h-3zM381 896h3v1h-3zM397 889h7v1h-7zM408 889h3v1h-3zM408 896h3v1h-3zM415 889h6v1h-6zM415 892h6v1h-6zM425 889h5v1h-5zM425 892h5v1h-5zM425 896h5v1h-5zM460 889h1v5h-1zM460 895h1v2h-1zM466 889h1v1h-1zM466 896h1v1h-1zM471 889h3v1h-3zM478 889h6v1h-6zM478 892h6v1h-6zM487 889h5v1h-5zM487 896h5v1h-5zM506 889h5v1h-5zM523 889h5v1h-5zM523 896h5v1h-5zM532 889h7v1h-7zM532 896h7v1h-7zM543 889h4v1h-4zM543 896h4v1h-4zM560 889h5v1h-5zM568 889h7v1h-7zM587 889h5v1h-5zM596 889h5v1h-5zM596 896h5v1h-5zM614 889h5v1h-5zM622 889h7v1h-7zM271 890h1v2h-1zM271 893h1v3h-1zM280 890h2v1h-2zM299 890h1v1h-1zM303 890h1v1h-1zM307 890h2v1h-2zM317 890h1v1h-1zM317 895h1v1h-1zM322 890h1v1h-1zM322 895h1v1h-1zM325 890h1v2h-1zM325 893h1v3h-1zM334 890h1v6h-1zM339 890h1v1h-1zM339 895h1v1h-1zM352 890h1v2h-1zM352 893h1v3h-1zM362 890h1v1h-1zM362 895h1v1h-1zM367 890h1v1h-1zM367 895h1v1h-1zM380 890h1v1h-1zM380 895h1v1h-1zM384 890h1v1h-1zM384 895h1v1h-1zM400 890h1v7h-1zM407 890h1v1h-1zM407 895h1v1h-1zM411 890h1v1h-1zM411 895h1v1h-1zM415 890h1v2h-1zM415 893h1v4h-1zM421 890h1v2h-1zM424 890h1v2h-1zM424 895h1v1h-1zM430 890h1v1h-1zM430 893h1v3h-1zM465 890h1v1h-1zM465 895h1v1h-1zM470 890h1v1h-1zM474 890h1v1h-1zM478 890h1v2h-1zM478 893h1v4h-1zM484 890h1v2h-1zM487 890h1v6h-1zM492 890h1v1h-1zM492 895h1v1h-1zM505 890h1v3h-1zM511 890h1v2h-1zM511 893h1v2h-1zM523 890h1v6h-1zM528 890h1v1h-1zM528 895h1v1h-1zM532 890h1v2h-1zM532 893h1v3h-1zM542 890h1v1h-1zM542 895h1v1h-1zM547 890h1v1h-1zM547 895h1v1h-1zM559 890h1v1h-1zM559 895h1v1h-1zM565 890h1v2h-1zM568 890h1v2h-1zM568 895h1v1h-1zM586 890h1v1h-1zM586 895h1v1h-1zM592 890h1v2h-1zM595 890h1v6h-1zM601 890h1v6h-1zM613 890h1v1h-1zM613 895h1v1h-1zM619 890h1v2h-1zM627 890h1v1h-1zM627 893h1v1h-1zM282 891h1v1h-1zM298 891h1v2h-1zM298 894h1v3h-1zM304 891h1v2h-1zM304 894h1v3h-1zM309 891h1v1h-1zM316 891h1v4h-1zM340 891h1v4h-1zM361 891h1v4h-1zM379 891h1v4h-1zM385 891h1v4h-1zM406 891h1v4h-1zM412 891h1v4h-1zM464 891h1v1h-1zM464 894h1v1h-1zM469 891h1v2h-1zM469 894h1v3h-1zM475 891h1v2h-1zM475 894h1v3h-1zM493 891h1v4h-1zM529 891h1v4h-1zM541 891h1v4h-1zM607 891h1v1h-1zM607 894h1v1h-1zM626 891h1v1h-1zM271 892h6v1h-6zM283 892h1v2h-1zM289 892h7v1h-7zM310 892h1v2h-1zM325 892h6v1h-6zM352 892h6v1h-6zM370 892h7v1h-7zM443 892h5v1h-5zM463 892h1v1h-1zM510 892h2v1h-2zM532 892h6v1h-6zM564 892h1v1h-1zM568 892h6v1h-6zM591 892h1v1h-1zM598 892h1v2h-1zM618 892h1v1h-1zM625 892h2v1h-2zM298 893h7v1h-7zM462 893h2v1h-2zM469 893h7v1h-7zM506 893h4v1h-4zM506 896h4v1h-4zM561 893h3v1h-3zM574 893h1v3h-1zM588 893h3v1h-3zM615 893h3v1h-3zM284 894h1v1h-1zM311 894h1v1h-1zM460 894h2v1h-2zM560 894h1v1h-1zM587 894h1v1h-1zM614 894h1v1h-1zM628 894h1v2h-1zM285 895h2v1h-2zM312 895h2v1h-2zM510 895h1v1h-1zM622 895h1v1h-1zM559 896h7v1h-7zM569 896h5v1h-5zM586 896h7v1h-7zM613 896h7v1h-7zM623 896h5v1h-5z"/>
<path fill="#ffbbff" d="M875 131h17v45h-17z"/>
<path fill="#ff00ff" d="M875 176h17v46h-17z"/>
<path fill="#800000" d="M875 222h17v44h-17z"/>
<path fill="#ff0000" d="M875 266h17v44h-17z"/>
<path fill="#d25400" d="M875 310h17v45h-17z"/>
<path fill="#40ecec" d="M514 328h2v2h-2zM512 330h6v2h-6zM480 336h4v4h-4zM536 364h2v2h-2zM536 368h2v2h-2zM542 364h1v2h-1zM542 367h1v1h-1zM544 364h1v1h-1zM544 365h2v1h-2zM544 368h2v1h-2zM534 366h6v2h-6zM543 366h5v1h-5zM544 367h4v1h-4zM545 369h1v1h-1zM546 438h6v4h-6zM546 442h4v2h-4zM875 710h17v45h-17z"/>
<path fill="#ff8014" d="M875 355h17v46h-17z"/>
<path fill="#e60000" d="M572 359h3v1h-3zM571 360h1v1h-1zM575 360h1v1h-1zM575 602h1v1h-1zM575 606h1v2h-1zM575 610h1v1h-1zM575 612h1v1h-1zM566 361h5v1h-5zM576 361h1v4h-1zM576 601h1v1h-1zM549 362h1v1h-1zM564 362h2v1h-2zM564 619h2v1h-2zM544 363h1v1h-1zM544 369h1v2h-1zM544 377h1v1h-1zM547 363h2v1h-2zM550 363h2v1h-2zM558 363h2v1h-2zM563 363h1v1h-1zM563 620h1v1h-1zM543 364h1v2h-1zM543 367h1v2h-1zM543 378h1v1h-1zM545 364h2v1h-2zM552 364h1v2h-1zM557 364h1v1h-1zM560 364h3v1h-3zM555 365h2v1h-2zM577 365h1v2h-1zM577 600h1v1h-1zM542 366h1v1h-1zM542 379h1v1h-1zM552 366h3v1h-3zM578 367h3v1h-3zM580 368h1v2h-1zM580 388h1v2h-1zM580 600h1v2h-1zM582 369h3v1h-3zM588 369h5v1h-5zM581 370h1v1h-1zM581 386h1v2h-1zM581 597h1v2h-1zM585 370h3v1h-3zM585 596h3v1h-3zM593 370h1v4h-1zM593 410h1v1h-1zM593 874h1v14h-1zM545 371h1v3h-1zM545 375h1v2h-1zM546 374h1v1h-1zM592 374h1v1h-1zM592 859h1v15h-1zM591 375h1v4h-1zM590 379h1v1h-1zM541 380h1v2h-1zM588 380h2v1h-2zM588 597h2v1h-2zM586 381h2v1h-2zM540 382h1v1h-1zM585 382h1v2h-1zM585 403h1v3h-1zM535 383h5v1h-5zM533 384h2v1h-2zM584 384h1v1h-1zM584 402h1v1h-1zM531 385h2v1h-2zM582 385h2v1h-2zM530 386h1v1h-1zM528 387h2v1h-2zM528 388h1v1h-1zM525 389h3v1h-3zM522 390h2v1h-2zM579 390h1v2h-1zM519 391h1v1h-1zM521 391h1v1h-1zM524 391h2v1h-2zM519 392h2v1h-2zM580 392h2v1h-2zM580 397h2v2h-2zM516 393h3v1h-3zM582 393h1v4h-1zM582 399h1v2h-1zM582 596h1v1h-1zM515 394h1v1h-1zM497 395h1v1h-1zM510 395h5v1h-5zM484 396h2v1h-2zM497 396h3v1h-3zM509 396h1v1h-1zM482 397h2v1h-2zM486 397h2v1h-2zM491 397h6v1h-6zM498 397h1v1h-1zM500 397h1v1h-1zM500 626h1v5h-1zM500 632h1v7h-1zM508 397h1v1h-1zM469 398h13v1h-13zM488 398h3v1h-3zM501 398h3v1h-3zM507 398h1v1h-1zM467 399h2v1h-2zM488 399h1v1h-1zM504 399h3v1h-3zM466 400h1v1h-1zM464 401h2v1h-2zM583 401h2v1h-2zM583 597h2v1h-2zM463 402h1v1h-1zM462 403h1v1h-1zM460 404h2v1h-2zM458 405h2v1h-2zM454 406h4v1h-4zM586 406h1v1h-1zM453 407h1v1h-1zM587 407h2v1h-2zM452 408h1v1h-1zM589 408h2v1h-2zM451 409h1v1h-1zM591 409h2v1h-2zM591 857h2v2h-2zM450 410h1v1h-1zM449 411h1v1h-1zM594 411h1v1h-1zM448 412h1v1h-1zM595 412h1v1h-1zM604 412h1v1h-1zM604 589h1v1h-1zM343 413h105v1h-105zM596 413h1v1h-1zM603 413h1v1h-1zM605 413h2v1h-2zM343 414h1v49h-1zM343 474h1v16h-1zM343 501h1v47h-1zM597 414h6v1h-6zM607 414h1v1h-1zM608 415h1v1h-1zM608 416h3v1h-3zM611 417h5v1h-5zM616 418h1v1h-1zM616 439h1v2h-1zM616 586h1v1h-1zM619 418h2v1h-2zM617 419h2v1h-2zM617 585h2v1h-2zM621 419h1v1h-1zM621 442h1v1h-1zM621 581h1v2h-1zM622 420h1v1h-1zM622 435h1v1h-1zM623 421h1v1h-1zM623 424h1v1h-1zM623 432h1v3h-1zM623 445h1v2h-1zM623 422h2v1h-2zM623 581h2v1h-2zM624 423h1v1h-1zM624 425h1v1h-1zM624 431h1v1h-1zM625 426h3v1h-3zM628 427h1v2h-1zM627 429h1v1h-1zM696 429h1v1h-1zM625 430h2v1h-2zM687 430h4v1h-4zM694 430h2v1h-2zM697 430h1v1h-1zM686 431h1v1h-1zM686 567h1v1h-1zM691 431h3v1h-3zM698 431h1v1h-1zM685 432h1v1h-1zM685 568h1v1h-1zM699 432h2v1h-2zM684 433h1v1h-1zM700 433h1v1h-1zM702 433h2v1h-2zM757 433h1v1h-1zM757 541h1v1h-1zM781 433h1v1h-1zM781 510h1v1h-1zM781 512h1v2h-1zM781 534h1v1h-1zM682 434h2v1h-2zM700 434h2v1h-2zM704 434h2v1h-2zM752 434h5v1h-5zM758 434h2v1h-2zM761 434h3v1h-3zM768 434h10v1h-10zM781 434h3v1h-3zM680 435h2v1h-2zM706 435h1v1h-1zM751 435h1v1h-1zM760 435h1v1h-1zM764 435h4v1h-4zM778 435h3v1h-3zM784 435h2v1h-2zM620 436h2v1h-2zM679 436h1v2h-1zM707 436h2v1h-2zM715 436h1v1h-1zM750 436h1v1h-1zM786 436h1v1h-1zM618 437h2v1h-2zM709 437h3v1h-3zM714 437h1v1h-1zM714 551h1v1h-1zM716 437h3v1h-3zM749 437h1v2h-1zM749 549h1v1h-1zM787 437h1v1h-1zM787 447h1v1h-1zM617 438h1v1h-1zM672 438h7v1h-7zM712 438h3v1h-3zM719 438h2v1h-2zM788 438h2v1h-2zM671 439h1v1h-1zM671 571h1v1h-1zM721 439h2v1h-2zM748 439h1v1h-1zM790 439h1v1h-1zM669 440h2v1h-2zM723 440h2v1h-2zM747 440h2v1h-2zM747 550h2v1h-2zM791 440h1v1h-1zM615 441h1v2h-1zM615 587h1v1h-1zM647 441h4v1h-4zM668 441h1v2h-1zM725 441h1v2h-1zM745 441h2v1h-2zM789 441h1v4h-1zM647 442h1v1h-1zM647 585h1v1h-1zM651 442h1v1h-1zM732 442h4v1h-4zM743 442h2v1h-2zM614 443h1v1h-1zM617 443h5v1h-5zM646 443h1v1h-1zM646 586h1v1h-1zM652 443h1v1h-1zM667 443h1v1h-1zM726 443h2v1h-2zM731 443h1v1h-1zM736 443h1v1h-1zM742 443h1v1h-1zM742 553h1v1h-1zM615 444h2v1h-2zM622 444h2v1h-2zM641 444h1v1h-1zM645 444h1v1h-1zM645 587h1v1h-1zM653 444h14v1h-14zM728 444h3v1h-3zM737 444h1v1h-1zM740 444h2v1h-2zM740 552h2v1h-2zM638 445h3v1h-3zM642 445h4v1h-4zM738 445h1v1h-1zM740 445h1v1h-1zM788 445h1v2h-1zM739 446h1v1h-1zM624 447h2v1h-2zM638 447h1v2h-1zM625 448h1v2h-1zM625 582h1v1h-1zM784 448h3v1h-3zM630 449h7v1h-7zM782 449h2v1h-2zM782 465h2v1h-2zM626 450h1v1h-1zM628 450h2v1h-2zM628 584h2v1h-2zM779 450h3v1h-3zM779 464h3v1h-3zM842 450h1v1h-1zM842 459h1v1h-1zM842 461h1v1h-1zM626 451h2v1h-2zM626 583h2v1h-2zM778 451h1v1h-1zM778 481h1v1h-1zM778 483h1v2h-1zM840 451h2v1h-2zM843 451h2v1h-2zM777 452h1v3h-1zM777 462h1v1h-1zM777 480h1v1h-1zM777 485h1v5h-1zM777 498h1v2h-1zM840 452h1v1h-1zM840 456h1v2h-1zM845 452h1v1h-1zM841 453h2v1h-2zM842 454h2v1h-2zM773 455h4v1h-4zM841 455h1v1h-1zM841 458h1v1h-1zM771 456h2v1h-2zM775 456h2v1h-2zM775 477h2v1h-2zM772 457h1v2h-1zM773 459h1v2h-1zM773 505h1v1h-1zM837 460h6v1h-6zM774 461h3v1h-3zM837 461h2v1h-2zM839 462h1v2h-1zM344 463h1v11h-1zM344 490h1v11h-1zM777 463h2v1h-2zM777 476h2v1h-2zM777 508h2v1h-2zM832 463h2v1h-2zM831 464h1v2h-1zM831 477h1v1h-1zM831 481h1v7h-1zM831 489h1v3h-1zM831 510h1v1h-1zM831 516h1v1h-1zM834 464h5v1h-5zM783 466h1v7h-1zM830 466h1v1h-1zM830 472h1v2h-1zM830 476h1v1h-1zM830 488h1v1h-1zM830 492h1v3h-1zM830 507h1v1h-1zM830 511h1v1h-1zM829 467h1v1h-1zM829 471h1v1h-1zM829 474h1v2h-1zM829 506h1v1h-1zM829 508h1v1h-1zM829 510h1v1h-1zM827 468h2v1h-2zM826 469h1v1h-1zM826 520h1v1h-1zM828 470h2v1h-2zM781 473h2v1h-2zM780 474h1v1h-1zM780 514h1v1h-1zM780 526h1v3h-1zM780 531h1v3h-1zM780 535h1v2h-1zM779 475h1v1h-1zM779 482h1v1h-1zM779 529h1v1h-1zM776 478h1v2h-1zM776 490h1v2h-1zM776 495h1v3h-1zM776 500h1v1h-1zM776 507h1v1h-1zM776 518h1v1h-1zM832 478h1v3h-1zM832 494h1v1h-1zM832 512h1v4h-1zM775 492h1v3h-1zM775 501h1v3h-1zM775 516h1v2h-1zM775 523h1v1h-1zM775 538h1v1h-1zM831 495h2v1h-2zM833 496h1v1h-1zM834 497h2v1h-2zM836 498h1v2h-1zM837 500h1v1h-1zM836 501h2v1h-2zM835 502h1v1h-1zM834 503h1v1h-1zM773 504h2v1h-2zM829 504h5v1h-5zM828 505h1v1h-1zM828 509h1v1h-1zM828 518h1v1h-1zM773 506h3v1h-3zM779 509h2v1h-2zM782 511h1v1h-1zM776 515h4v1h-4zM776 537h4v1h-4zM829 517h2v1h-2zM774 519h1v3h-1zM827 519h1v1h-1zM824 521h2v1h-2zM774 522h2v1h-2zM824 522h1v2h-1zM775 524h3v1h-3zM823 524h1v1h-1zM823 526h1v2h-1zM778 525h2v1h-2zM822 525h1v1h-1zM822 528h1v1h-1zM821 529h1v2h-1zM780 530h2v1h-2zM782 531h4v1h-4zM820 531h1v1h-1zM786 532h2v1h-2zM819 532h1v2h-1zM788 533h5v1h-5zM793 534h2v1h-2zM818 534h1v1h-1zM795 535h5v1h-5zM817 535h1v1h-1zM800 536h1v1h-1zM816 536h1v2h-1zM771 537h3v1h-3zM800 537h7v1h-7zM813 537h2v1h-2zM765 538h2v1h-2zM770 538h1v1h-1zM807 538h2v1h-2zM811 538h2v1h-2zM757 539h8v1h-8zM767 539h1v1h-1zM769 539h1v1h-1zM809 539h2v1h-2zM756 540h1v1h-1zM756 545h1v1h-1zM768 540h1v1h-1zM756 542h2v3h-2zM347 545h1v1h-1zM352 545h1v1h-1zM346 546h1v1h-1zM348 546h1v1h-1zM350 546h4v1h-4zM753 546h3v1h-3zM345 547h1v1h-1zM349 547h1v1h-1zM354 547h1v1h-1zM752 547h1v1h-1zM343 548h2v2h-2zM355 548h1v1h-1zM750 548h2v1h-2zM356 549h2v1h-2zM730 549h5v1h-5zM342 550h3v2h-3zM358 550h2v1h-2zM715 550h2v1h-2zM727 550h3v1h-3zM735 550h1v1h-1zM360 551h1v1h-1zM717 551h5v1h-5zM726 551h1v1h-1zM735 551h5v1h-5zM744 551h3v1h-3zM361 552h1v1h-1zM713 552h1v1h-1zM722 552h4v1h-4zM743 552h1v1h-1zM361 553h2v1h-2zM712 553h1v2h-1zM363 554h1v2h-1zM696 554h4v1h-4zM693 555h3v1h-3zM700 555h5v1h-5zM362 556h2v1h-2zM693 556h1v2h-1zM705 556h7v1h-7zM363 557h2v1h-2zM365 558h1v1h-1zM365 561h1v2h-1zM692 558h1v1h-1zM364 559h1v1h-1zM691 559h1v2h-1zM364 560h2v1h-2zM689 561h2v1h-2zM688 562h1v4h-1zM688 857h1v11h-1zM366 563h1v2h-1zM367 565h1v1h-1zM368 566h4v1h-4zM687 566h1v1h-1zM371 567h1v1h-1zM370 568h4v1h-4zM373 569h1v1h-1zM683 569h2v1h-2zM373 570h2v1h-2zM672 570h4v1h-4zM678 570h5v1h-5zM374 571h2v1h-2zM676 571h2v1h-2zM375 572h2v1h-2zM662 572h3v1h-3zM668 572h3v1h-3zM375 573h1v1h-1zM378 573h1v1h-1zM659 573h3v1h-3zM665 573h3v1h-3zM376 574h2v1h-2zM379 574h2v1h-2zM658 574h1v1h-1zM381 575h1v1h-1zM381 577h1v1h-1zM657 575h1v6h-1zM380 576h2v1h-2zM381 578h2v2h-2zM383 580h1v1h-1zM383 582h1v1h-1zM383 586h1v2h-1zM621 580h2v1h-2zM382 581h2v1h-2zM382 585h2v1h-2zM656 581h2v1h-2zM652 582h4v1h-4zM384 583h2v1h-2zM384 588h2v1h-2zM620 583h1v1h-1zM649 583h3v1h-3zM384 584h1v1h-1zM619 584h1v1h-1zM648 584h1v1h-1zM630 585h2v1h-2zM613 586h2v1h-2zM632 586h1v1h-1zM606 587h7v1h-7zM633 587h1v1h-1zM604 588h2v1h-2zM633 588h6v1h-6zM643 588h2v1h-2zM385 589h2v2h-2zM639 589h4v1h-4zM603 590h2v1h-2zM385 591h3v1h-3zM602 591h1v1h-1zM387 592h1v2h-1zM601 592h1v1h-1zM600 593h1v1h-1zM388 594h2v1h-2zM599 594h1v2h-1zM390 595h1v1h-1zM390 596h3v1h-3zM597 596h2v1h-2zM393 597h1v1h-1zM393 600h1v2h-1zM594 597h3v1h-3zM391 598h3v1h-3zM590 598h4v1h-4zM394 599h1v1h-1zM578 599h2v1h-2zM139 601h43v1h-43zM138 602h1v1h-1zM182 602h41v1h-41zM393 602h2v1h-2zM137 603h1v2h-1zM223 603h74v1h-74zM395 603h2v1h-2zM574 603h1v3h-1zM574 608h1v2h-1zM574 611h1v1h-1zM296 604h1v2h-1zM396 604h2v1h-2zM136 605h1v1h-1zM397 605h1v1h-1zM403 605h1v1h-1zM135 606h1v1h-1zM296 606h11v1h-11zM309 606h38v1h-38zM349 606h56v1h-56zM134 607h1v1h-1zM307 607h2v1h-2zM404 607h1v1h-1zM133 608h1v2h-1zM404 608h2v1h-2zM406 609h2v1h-2zM132 610h1v1h-1zM408 610h2v1h-2zM131 611h1v1h-1zM410 611h1v2h-1zM130 612h1v2h-1zM411 613h2v1h-2zM573 613h2v1h-2zM129 614h1v1h-1zM413 614h2v1h-2zM572 614h1v1h-1zM128 615h1v1h-1zM414 615h1v2h-1zM568 615h4v1h-4zM127 616h1v1h-1zM567 616h1v2h-1zM126 617h1v2h-1zM415 617h1v1h-1zM416 618h2v1h-2zM566 618h1v1h-1zM125 619h1v1h-1zM418 619h2v1h-2zM124 620h1v1h-1zM420 620h2v1h-2zM548 620h14v1h-14zM123 621h1v1h-1zM421 621h1v1h-1zM546 621h2v1h-2zM562 621h1v1h-1zM122 622h1v2h-1zM422 622h1v1h-1zM544 622h2v1h-2zM423 623h1v1h-1zM542 623h2v1h-2zM121 624h1v1h-1zM424 624h1v1h-1zM457 624h28v1h-28zM538 624h4v1h-4zM425 625h32v1h-32zM485 625h32v1h-32zM520 625h18v1h-18zM119 626h1v1h-1zM118 627h1v2h-1zM117 629h1v1h-1zM116 630h1v1h-1zM115 631h1v1h-1zM114 632h1v2h-1zM113 634h1v1h-1zM112 635h1v1h-1zM111 636h1v2h-1zM110 638h1v1h-1zM109 639h1v1h-1zM501 639h1v22h-1zM108 640h1v1h-1zM107 641h1v2h-1zM106 643h1v1h-1zM105 644h1v1h-1zM104 645h1v1h-1zM103 646h1v2h-1zM102 648h1v1h-1zM101 649h1v1h-1zM100 650h1v2h-1zM99 652h1v2h-1zM98 654h1v1h-1zM97 655h1v2h-1zM96 657h1v1h-1zM95 658h1v2h-1zM94 660h1v2h-1zM502 661h1v16h-1zM93 662h1v1h-1zM92 663h1v2h-1zM35 664h21v1h-21zM34 665h1v2h-1zM56 665h1v2h-1zM91 665h1v2h-1zM33 667h1v1h-1zM57 667h2v1h-2zM90 667h1v1h-1zM32 668h1v2h-1zM59 668h1v1h-1zM89 668h1v2h-1zM60 669h2v1h-2zM31 670h1v1h-1zM62 670h1v2h-1zM88 670h1v2h-1zM30 671h1v2h-1zM61 672h1v2h-1zM87 672h1v1h-1zM29 673h1v1h-1zM29 679h1v2h-1zM86 673h1v2h-1zM28 674h1v2h-1zM28 677h1v2h-1zM60 674h1v2h-1zM85 675h1v1h-1zM27 676h1v1h-1zM61 676h2v1h-2zM84 676h1v2h-1zM63 677h2v1h-2zM503 677h1v16h-1zM65 678h2v1h-2zM83 678h1v2h-1zM67 679h1v1h-1zM68 680h1v1h-1zM75 680h8v1h-8zM19 681h12v1h-12zM69 681h6v1h-6zM8 682h11v1h-11zM8 683h1v9h-1zM7 692h1v13h-1zM504 693h1v105h-1zM6 705h1v10h-1zM5 715h1v7h-1zM0 722h6v1h-6zM486 798h68v1h-68zM399 799h4v1h-4zM437 799h49v1h-49zM553 799h1v10h-1zM553 810h1v46h-1zM399 800h38v1h-38zM399 801h1v18h-1zM399 820h1v11h-1zM267 824h1v1h-1zM265 825h2v1h-2zM263 826h2v1h-2zM261 827h2v1h-2zM259 828h2v1h-2zM257 829h2v1h-2zM255 830h2v1h-2zM315 830h15v1h-15zM253 831h24v1h-24zM279 831h36v1h-36zM330 831h70v1h-70zM251 832h2v1h-2zM276 832h4v1h-4zM249 833h2v1h-2zM247 834h2v1h-2zM245 835h2v1h-2zM243 836h2v1h-2zM241 837h2v1h-2zM239 838h2v1h-2zM237 839h2v1h-2zM235 840h2v1h-2zM233 841h2v1h-2zM230 842h3v1h-3zM228 843h2v1h-2zM226 844h2v1h-2zM224 845h2v1h-2zM222 846h2v1h-2zM220 847h2v1h-2zM218 848h2v1h-2zM216 849h2v1h-2zM214 850h2v1h-2zM212 851h2v1h-2zM210 852h2v1h-2zM207 853h3v1h-3zM205 854h2v1h-2zM203 855h2v1h-2zM613 855h17v1h-17zM650 855h18v1h-18zM201 856h2v1h-2zM554 856h1v16h-1zM591 856h22v1h-22zM630 856h20v1h-20zM668 856h21v1h-21zM199 857h2v1h-2zM197 858h2v1h-2zM195 859h2v1h-2zM193 860h2v1h-2zM191 861h2v1h-2zM189 862h2v1h-2zM187 863h2v1h-2zM185 864h2v1h-2zM182 865h3v1h-3zM180 866h2v1h-2zM178 867h2v1h-2zM176 868h2v1h-2zM689 868h1v7h-1zM174 869h2v1h-2zM172 870h2v1h-2zM170 871h2v1h-2zM168 872h2v1h-2zM555 872h1v16h-1zM166 873h2v1h-2zM164 874h2v1h-2zM810 874h84v1h-84zM162 875h2v1h-2zM689 875h42v1h-42zM745 875h65v1h-65zM893 875h1v2h-1zM893 882h1v3h-1zM159 876h3v1h-3zM731 876h14v1h-14zM157 877h2v1h-2zM892 877h1v5h-1zM155 878h2v1h-2zM153 879h2v1h-2zM151 880h2v1h-2zM149 881h2v1h-2zM147 882h2v1h-2zM145 883h2v1h-2zM143 884h2v1h-2zM141 885h2v1h-2zM894 885h1v3h-1zM139 886h2v1h-2zM137 887h2v1h-2z"/>
<path fill="#deb010" d="M875 401h17v45h-17z"/>
<path fill="#ffde20" d="M875 446h17v40h-17z"/>
<path fill="#137013" d="M875 486h17v45h-17z"/>
<path fill="#60c030" d="M875 531h17v46h-17z"/>
<path fill="#000080" d="M875 577h17v44h-17zM528 762h4v2h-4zM534 762h4v2h-4zM526 764h12v2h-12zM528 766h2v2h-2z"/>
<path fill="#1a50a0" d="M875 621h17v44h-17zM528 750h2v2h-2zM510 752h8v2h-8zM524 752h6v2h-6zM508 754h20v2h-20zM508 756h2v2h-2zM520 756h4v2h-4zM496 758h2v2h-2zM514 758h12v4h-12zM538 758h16v2h-16zM488 760h10v4h-10zM530 760h2v2h-2zM534 760h20v2h-20zM476 762h6v2h-6zM526 762h2v2h-2zM532 762h2v2h-2zM538 762h18v2h-18zM476 764h22v4h-22zM538 764h6v2h-6zM530 766h14v2h-14zM476 768h2v2h-2zM482 768h6v2h-6zM526 768h14v2h-14zM522 770h8v2h-8zM522 772h4v2h-4zM576 772h2v2h-2zM570 774h8v2h-8zM564 776h14v2h-14zM560 778h20v2h-20zM560 780h18v2h-18zM562 782h4v2h-4zM568 782h4v2h-4z"/>
<path fill="#2c9ec6" d="M488 656h6v4h-6zM502 658h4v2h-4zM510 658h4v2h-4zM488 660h8v2h-8zM498 660h3v1h-3zM502 660h12v1h-12zM498 661h4v1h-4zM503 661h11v1h-11zM500 662h2v2h-2zM503 662h1v2h-1zM508 662h2v2h-2zM875 665h17v45h-17z"/>
</svg>
</body></html>
